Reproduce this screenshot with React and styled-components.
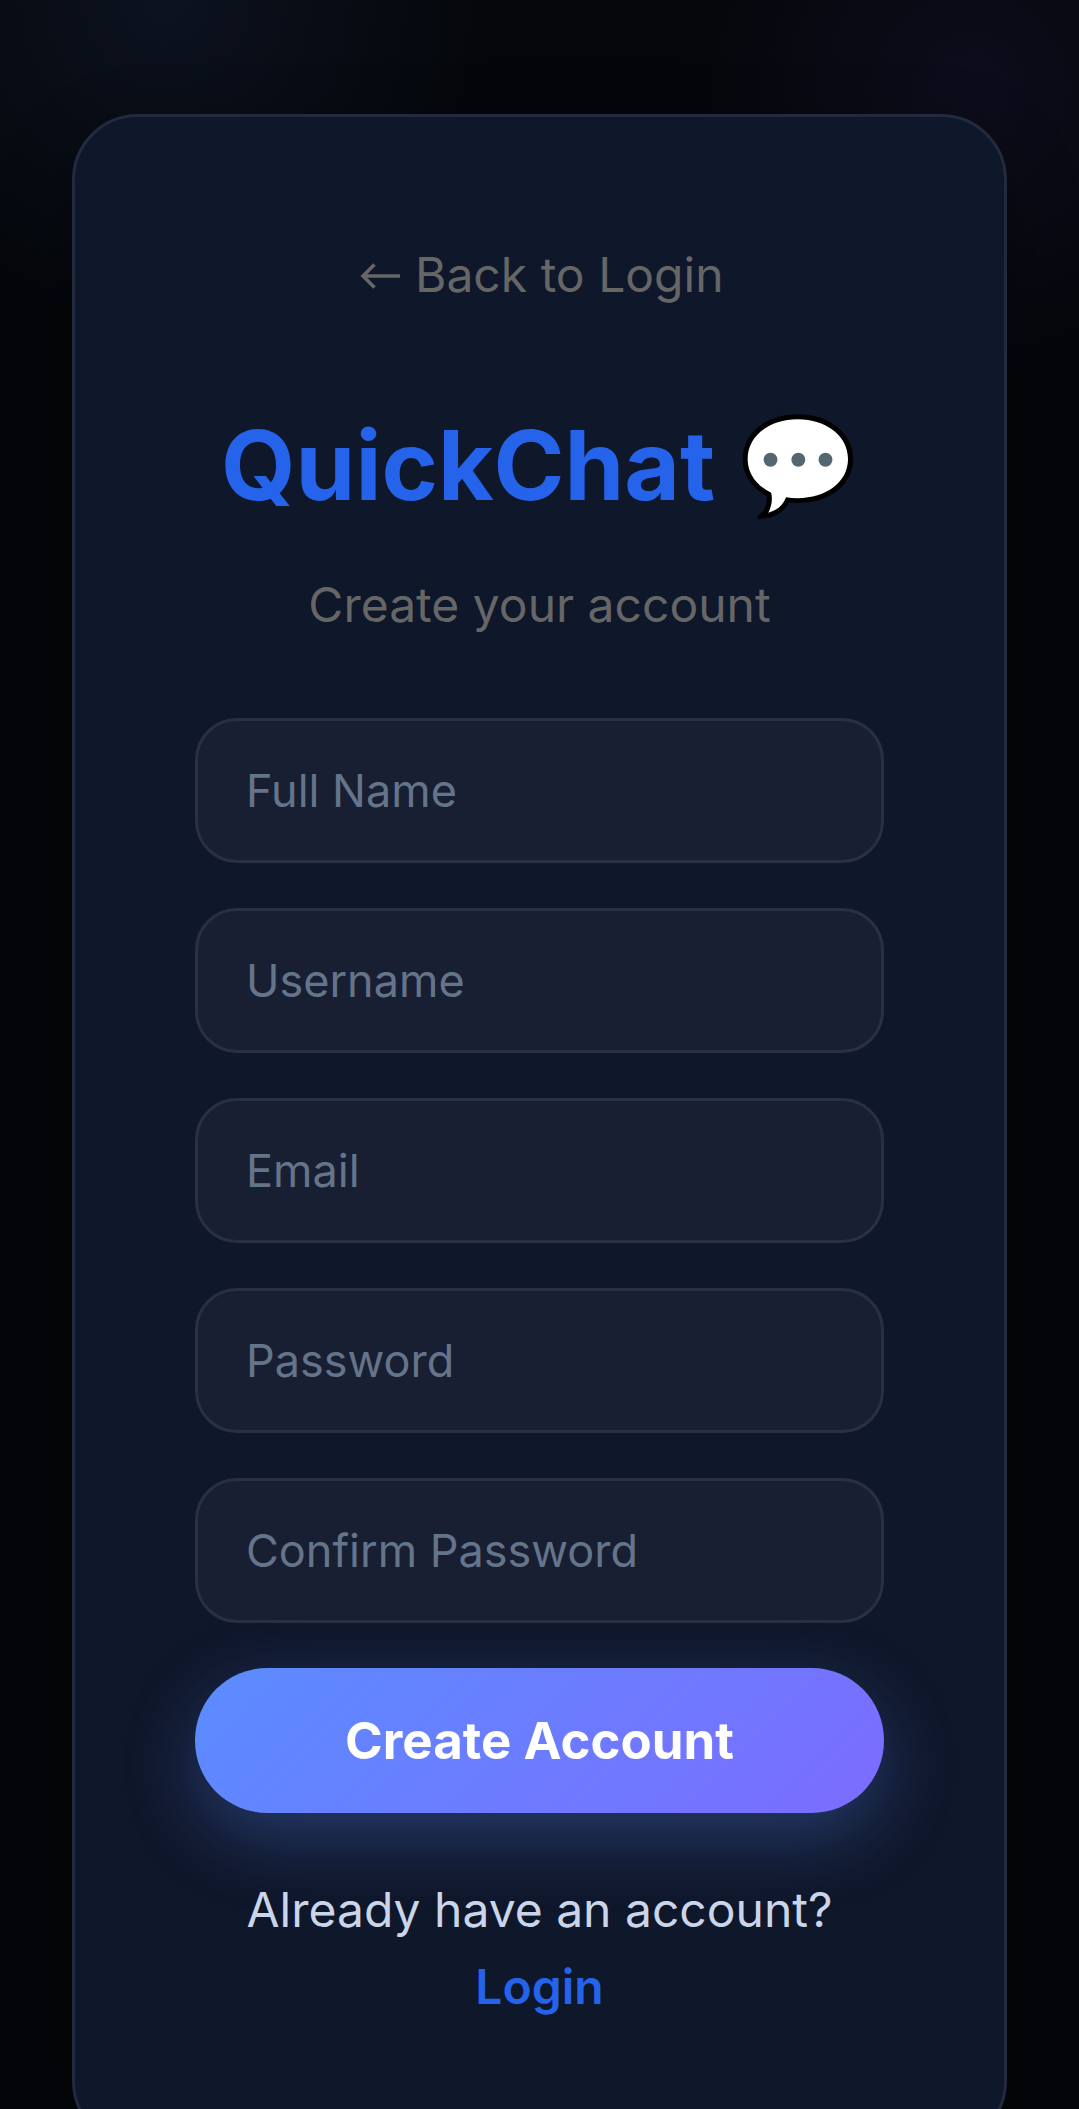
import React, {useState} from "react";
import styled, {createGlobalStyle} from "styled-components";

const colors = {
    background: '#040609',
    card: '#0f172a',
    cardBorder: '#23293e',
    field: '#191f32',
    fieldBorder: '#293042',
    blue: '#2563eb',
    muted: '#666666',
    text: '#cbd5e9',
    placeholder: '#64748b',
}

const fields = [
    {name: 'fullName', label: 'Full Name', type: 'text'},
    {name: 'username', label: 'Username', type: 'text'},
    {name: 'email', label: 'Email', type: 'email'},
    {name: 'password', label: 'Password', type: 'password'},
    {name: 'confirmPassword', label: 'Confirm Password', type: 'password'},
]

export default function App() {
    const [form, setForm] = useState({})

    let handleChange = (e) => {
        setForm({...form, [e.target.name]: e.target.value})
    }

    let handleSubmit = (e) => {
        e.preventDefault();
    }

    return (
        <Page>
            <GlobalStyle/>
            <Card>
                <BackLink href="#login"><BackArrow/> Back to Login</BackLink>
                <Title>QuickChat <SpeechBubble/></Title>
                <SubTitle>Create your account</SubTitle>
                <Form onSubmit={handleSubmit}>
                    {fields.map(({name, label, type}) => (
                        <Field
                            key={name}
                            type={type}
                            name={name}
                            placeholder={label}
                            aria-label={label}
                            value={form[name] || ''}
                            onChange={handleChange}
                        />
                    ))}
                    <SubmitButton type="submit">Create Account</SubmitButton>
                </Form>
                <Footer>
                    Already have an account? <LoginLink href="#login">Login</LoginLink>
                </Footer>
            </Card>
        </Page>
    );
}

function BackArrow() {
    return (
        <Arrow viewBox="0 0 46 32" aria-hidden="true">
            <path d="M44 16H7M18.5 4.5L7 16L18.5 27.5" fill="none" stroke="currentColor" strokeWidth="3.6"/>
        </Arrow>
    )
}

function SpeechBubble() {
    const shape = "M232 58C318 58 384 108 384 178C384 248 318 296 232 296C220 296 208 295 197 293C188 316 170 333 143 340C153 322 157 300 152 280C108 258 81 222 81 178C81 108 146 58 232 58Z"

    return (
        <Bubble viewBox="66 42 334 320" aria-hidden="true">
            <path d={shape} fill="#000" stroke="#000" strokeWidth="30" strokeLinejoin="round"/>
            <path d="M140 300C142 322 130 336 110 350L112 359C150 358 186 344 204 308Z" fill="#000"/>
            <path d={shape} fill="#fff"/>
            <circle cx="150" cy="180" r="21" fill="#546770"/>
            <circle cx="234" cy="180" r="21" fill="#546770"/>
            <circle cx="316" cy="180" r="21" fill="#546770"/>
        </Bubble>
    )
}

const GlobalStyle = createGlobalStyle`
  * {
    box-sizing: border-box;
  }

  html {
    scrollbar-width: none;
  }

  body {
    margin: 0;
    background: ${colors.background};
    font-family: Inter, "Liberation Sans", sans-serif;
  }
`

const Page = styled.div`
  min-height: 100vh;
  padding: 114px 72px;
  display: flex;
  justify-content: center;
  background:
    radial-gradient(circle at 165px 0, rgba(91, 140, 255, 0.09), transparent 340px),
    radial-gradient(circle at 90% 90px, rgba(124, 92, 255, 0.08), transparent 300px);
`

const Card = styled.main`
  width: 100%;
  max-width: 1200px;
  padding: 119px 120px;
  border: 3px solid ${colors.cardBorder};
  border-radius: 66px;
  background: ${colors.card};
  box-shadow: 0 24px 72px rgba(0, 0, 0, 0.3);
  display: flex;
  flex-direction: column;
  align-items: center;
  font-size: 48px;
  line-height: 77px;
  text-align: center;
`

const BackLink = styled.a`
  color: ${colors.muted};
  text-decoration: none;
`

const Arrow = styled.svg`
  width: 46px;
  height: 32px;
`

const Title = styled.h1`
  margin: 75px 0 24px;
  color: ${colors.blue};
  font-size: 96px;
  font-weight: 700;
  line-height: 154px;
`

const Bubble = styled.svg`
  width: 112px;
  height: 106px;
  margin: 0 4px;
  vertical-align: -20px;
`

const SubTitle = styled.p`
  margin: 0 0 75px;
  color: ${colors.muted};
`

const Form = styled.form`
  width: 100%;
  display: flex;
  flex-direction: column;
  gap: 45px;
`

const Field = styled.input`
  width: 100%;
  height: 145px;
  padding: 0 48px;
  border: 3px solid ${colors.fieldBorder};
  border-radius: 42px;
  background: ${colors.field};
  color: ${colors.text};
  font-family: inherit;
  font-size: 45px;

  &::placeholder {
    color: ${colors.placeholder};
    opacity: 1;
  }
`

const SubmitButton = styled.button`
  height: 145px;
  border: none;
  border-radius: 72px;
  background: linear-gradient(135deg, #5b8cff, #7c6cff);
  box-shadow: 0 24px 72px rgba(91, 140, 255, 0.3);
  color: #fff;
  font-family: inherit;
  font-size: 51px;
  font-weight: 700;
  cursor: pointer;
`

const Footer = styled.p`
  margin: 58px 0 0;
  color: ${colors.text};
`

const LoginLink = styled.a`
  color: ${colors.blue};
  font-weight: 600;
  text-decoration: none;
`
